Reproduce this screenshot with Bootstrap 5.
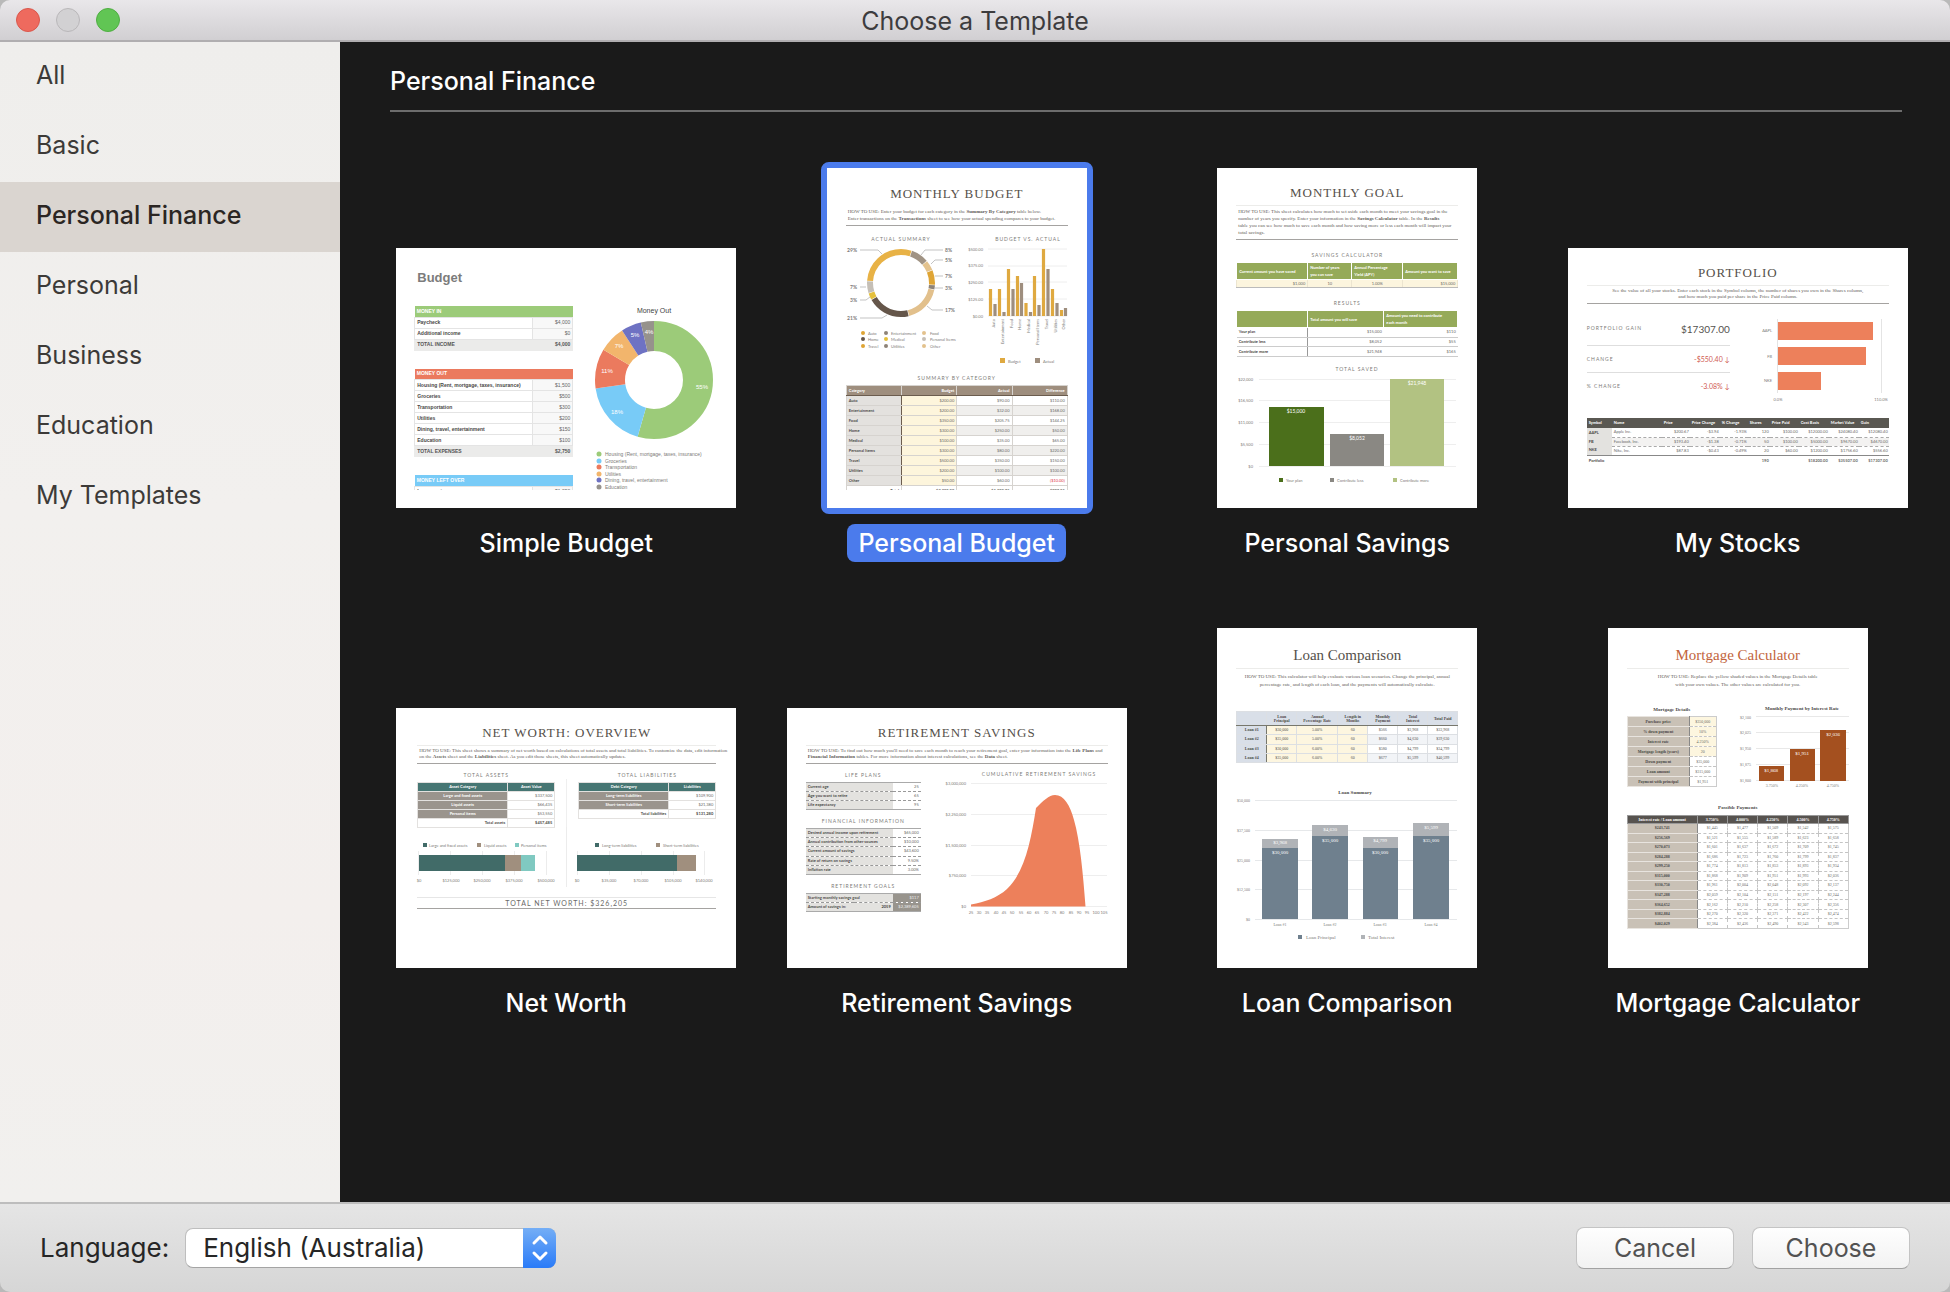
<!DOCTYPE html>
<html lang="en">
<head>
<meta charset="utf-8">
<meta name="viewport" content="width=device-width, initial-scale=1">
<title>Choose a Template</title>
<link href="https://cdn.jsdelivr.net/npm/bootstrap@5.3.0/dist/css/bootstrap.min.css" rel="stylesheet">
<style>
  :root { --accent: #4b7bec; }
  body { font-family: Inter, Roboto, "Liberation Sans", sans-serif; font-size: 25px; line-height: 38px; color: #262626; background: #b9b9b9; }
  .window { border-radius: 10px; overflow: hidden; }

  /* title bar */
  .titlebar { height: 42px; background: linear-gradient(#e9e7ea, #d1cfd2); border-bottom: 2px solid #b0aeb0; }
  .titlebar h1 { font-size: 25px; line-height: 42px; font-weight: 400; color: #3d3c3e; }
  .lights { left: 16px; top: 8px; gap: 16px; }
  .light { width: 24px; height: 24px; border-radius: 50%; border: 1px solid #b9b7b9; background: #d2d1d3; padding: 0; }
  .light-close { background: #ee6a5e; border-color: #d9574c; }
  .light-zoom { background: #61c554; border-color: #4fae42; }

  /* categories */
  .sidebar { width: 340px; background: linear-gradient(#efeeec, #f2f0ee 40%, #f3efed 75%, #f1f0ee); }
  .sidebar .nav-link { padding: 14px 36px 18px; color: #3c3a38; }
  .sidebar .nav-link:hover { color: #111; }
  .sidebar .nav-link.active { background: #dad5d0; color: #2b2623; font-weight: 500; }

  /* gallery */
  .gallery { background: #1a1a1a; color: #fff; }
  .gallery-title { margin: 0 48px 0 50px; padding: 20px 0 10px; border-bottom: 2px solid #6d6d6d; font-size: 25px; line-height: 38px; font-weight: 500; }
  .gallery-grid { padding: 56px 17px 0 31px; row-gap: 66px; }
  .template { color: #fff; text-decoration: none; font-weight: 500; }
  .template-slot { height: 340px; margin-bottom: 16px; }
  .template-name { padding: 0 11px; border-radius: 8px; }
  .template.selected .frame { border: 6px solid var(--accent); border-radius: 8px; margin: -6px; }
  .template.selected .template-name { background: var(--accent); }

  /* footer */
  .bottombar { background: linear-gradient(#e5e5e5, #d6d6d6); border-top: 2px solid #bdbdbd; padding: 23px 40px; height: 90px; }
  .bottombar label { font-size: 26px; }
  .lang-select { width: 371px; height: 40px; padding: 0 50px 0 17px; border: 1px solid #bebebe; border-bottom-color: #a4a4a4; border-radius: 8px; background: #fff; appearance: none; color: #262626; font-size: 26px; line-height: 38px; }
  .lang-arrows { right: 0; top: 0; width: 33px; height: 40px; border-radius: 0 8px 8px 0; background: linear-gradient(#74aef6, #2a7bf8); pointer-events: none; }
  .push { width: 158px; height: 42px; padding: 0; font-size: 25px; line-height: 38px; border: 1px solid #c4c4c4; border-bottom-color: #a2a2a2; border-radius: 8px; background: linear-gradient(#fefefe, #f2f2f2); color: #525252; }
  .push-row { gap: 18px; }

  /* document previews */
  .sheet { background: #fff; color: #6a6a68; font: 400 4px/1 Lato, "Open Sans", sans-serif; overflow: hidden; text-align: left; white-space: nowrap; }
  .sheet-wide { width: 340px; height: 260px; padding: 0 19px; }
  .sheet-tall { width: 260px; height: 340px; padding: 0 19px; }
  .sheet svg { display: block; overflow: visible; }
  .sheet svg text { dominant-baseline: central; fill: #7d7b78; }
  .sheet svg .mid { text-anchor: middle; }
  .sheet svg .end { text-anchor: end; }
  .sheet svg .cap { font-size: 5px; letter-spacing: 1px; text-anchor: middle; }
  .sheet svg .inv { fill: #fff; text-anchor: middle; }
  .doc-title { font: 400 13px/18px "Liberation Serif", serif; letter-spacing: 1px; color: #55504a; text-align: center; margin: 0; padding-top: 16px; }
  .doc-note { font: 400 5px/6px "Liberation Serif", serif; color: #5f5c58; margin: 3px 0 0; padding: 2px 2px 3px; border-top: 1px solid #ececea; border-bottom: 1px solid #a5a3a1; }
  .doc-cap { font-size: 5px; line-height: 12px; letter-spacing: 1px; font-weight: 400; color: #7d7b78; text-align: center; margin: 5px 0 1px; }
  .roomy .doc-cap { margin-top: 9px; }
  .roomy .doc-note { line-height: 7px; }
  .grid-table { width: 100%; table-layout: fixed; border-collapse: collapse; }
  .grid-table td, .grid-table th { padding: 0 2px; overflow: hidden; vertical-align: middle; }
  .grid-table th { font-weight: 700; color: #4a4846; }
  .grid-table td { text-align: right; }
  .ctr td, .ctr th { text-align: center; }

  .budget { font-family: "Liberation Sans", Arial, sans-serif; font-size: 5px; padding: 0 0 0 18px; }
  .budget .clip { height: 242px; overflow: hidden; }
  .budget .left { width: 159px; }
  .budget h2 { font-size: 13px; line-height: 20px; font-weight: 700; color: #7c7c7c; margin: 0 0 18px 3px; padding-top: 20px; }
  .budget table { margin-bottom: 18px; }
  .budget tr { height: 11px; }
  .budget td, .budget th { border: 1px solid #e4e4e4; }
  .budget td { background: #f8f8f8; border-left: 1px solid #888; color: #666; }
  .budget thead th { color: #fff; font-weight: 700; border: 0; }
  .budget .sum th, .budget .sum td { background: #ebebea; border-color: #ebebea; font-weight: 700; color: #555; }
  .budget .ruled th, .budget .ruled td { border-top: 1px solid #444; }
  .bg-in { background: #9ccb79; } .bg-out { background: #eb7a5e; } .bg-left { background: #78cbf7; }

  .monthly .doc-title { padding-top: 17px; }
  .monthly .doc-note { border-top-color: transparent; margin-top: 4px; padding-top: 0; line-height: 7px; }
  .monthly .doc-cap { margin-top: 0; }
  .monthly .clip { height: 322px; overflow: hidden; }
  .monthly tr { height: 10px; }
  .monthly th, .monthly td { border: 1px solid #d6d3cf; }
  .monthly thead th { background: #9e8e7e; color: #fff; text-align: right; border-bottom: 1px solid #6b5c4e; }
  .monthly thead th:first-child { text-align: left; }
  .monthly tbody th { background: #e3e1de; border-right: 1px solid #6b5c4e; }
  .monthly tbody td:nth-child(2) { background: #fdf5dc; }
  .monthly tbody tr:nth-child(even) td:nth-child(n+3) { background: #f0efed; }
  .monthly tfoot th, .monthly tfoot td { border-top: 1px solid #6b5c4e; text-align: right; font-weight: 700; }

  .goal thead th { background: #95aa59; color: #fff; border: 1px solid #fff; line-height: 7px; font-weight: 700; }
  .goal thead tr { height: 17px; }
  .goal .inputs { height: 26px; } .goal .inputs td { background: #fcf5de; border: 1px solid #ece5d0; border-bottom-color: #bbb; }
  .goal .results { height: 47px; } .goal .results tbody th, .goal .results td { border-bottom: 1px solid #ccc; }
  .goal .results tbody th { border-right: 1px solid #999; }

  .portfolio .doc-note { text-align: center; }
  .portfolio .stats { width: 143px; margin: 8px 0 0; }
  .portfolio .stats div { height: 27px; border-bottom: 1px solid #dedede; }
  .portfolio .stats div:first-child { height: 34px; }
  .portfolio .stats div:last-child { border: 0; }
  .portfolio dt { font-size: 5px; font-weight: 400; letter-spacing: 1px; color: #7d7b78; }
  .portfolio dd { margin: 0; font-size: 7px; color: #cf5a52; }
  .portfolio .gain { font-size: 10px; color: #55534f; }
  .portfolio tr { height: 9px; }
  .portfolio thead tr { height: 10px; }
  .portfolio tfoot tr { height: 11px; }
  .portfolio th, .portfolio td { padding: 0 1px 0 2px; }
  .portfolio thead th { background: #5a5852; color: #fff; }
  .portfolio tbody th { background: #e3e2df; }
  .portfolio tbody td { border-bottom: 1px dashed #aaa; }
  .portfolio tbody tr:nth-child(2) td { background: #f3f2f1; }
  .portfolio tbody td.text { text-align: left; }
  .portfolio tfoot th, .portfolio tfoot td { border-top: 1px solid #888; font-weight: 700; }

  .networth { padding: 0 20px 0 21px; }
  .networth .half { width: 138px; height: 63px; }
  .networth .divider { width: 1px; background: #efefef; margin-top: 15px; }
  .networth tr { height: 9px; }
  .networth th, .networth td { border: 1px solid #e3e1df; text-align: center; }
  .networth thead th { background: #467673; color: #fff; }
  .networth tbody th { background: #9a948d; color: #fff; }
  .networth td { text-align: right; }
  .networth tfoot th { text-align: right; } .networth tfoot td { border-top-color: #b39a86; font-weight: 700; color: #4a4846; }
  .networth .total { font-size: 7px; line-height: 10px; letter-spacing: 1px; text-align: center; margin: 5px 0 0; border-top: 1px solid #e6e6e6; border-bottom: 1px solid #a5a3a1; }

  .retire .left { width: 115px; }
  .retire table { border-top: 1px solid #aaa; border-bottom: 1px solid #aaa; }
  .retire th { background: #e3e2df; } .retire th, .retire td { border-bottom: 1px dashed #999; }
  .retire .life { height: 28px; } .retire .info { height: 47px; } .retire .goals { height: 19px; }
  .retire .goals td { background: #98948d; color: #eee; }
  .retire .goals th.year { text-align: right; }

  .serif { font-family: "Liberation Serif", serif; }
  .serif .doc-title { font-size: 15px; letter-spacing: 0; padding-top: 18px; }
  .serif .doc-note { line-height: 8px; margin-top: 4px; padding: 4px 0 0; border-bottom: 0; text-align: center; }
  .serif .doc-cap { letter-spacing: 0; font-weight: 700; color: #4a4846; }
  .serif svg .head { font-size: 5px; font-weight: 700; fill: #4a4846; text-anchor: middle; }
  .loan table { margin-top: 22px; height: 52px; }
  .loan thead tr { height: 14px; }
  .loan th, .loan td { border: 1px solid #dcdfe3; padding: 0; }
  .loan thead th { background: #d9dfe8; border-bottom: 1px solid #77776c; }
  .loan tbody th { background: #d9dfe8; border-right: 1px solid #77776c; }
  .loan tbody td { color: #4f4f4f; }
  .loan tbody td:nth-child(-n+4) { background: #fdf6e0; }
  .loan tbody tr:nth-child(even) td:nth-child(n+5) { background: #f2f4f7; }
  .mortgage .doc-title { color: #c2643c; }
  .mortgage .left { width: 90px; } .mortgage .left .doc-cap { margin: 15px 0 0; }
  .mortgage .details { height: 71px; } .mortgage .payments { height: 114px; }
  .mortgage .payments thead tr { height: 8px; }
  .mortgage th, .mortgage td { border: 1px dashed #c4c4c4; padding: 0; }
  .mortgage table { border: 1px solid #ccc; }
  .mortgage tbody th { background: #c9c1b6; border: 1px solid #e8e4df; border-right-color: #888; }
  .mortgage thead th { background: #57534f; color: #fff; border: 1px solid #999; }
  .mortgage .yellow td { background: #fdf6df; }
</style>
</head>
<body>
<div class="window d-flex flex-column vh-100">
  <header class="titlebar position-relative flex-shrink-0">
    <div class="lights d-flex position-absolute">
      <button type="button" class="light light-close" aria-label="Close"></button>
      <button type="button" class="light" aria-label="Minimise" disabled></button>
      <button type="button" class="light light-zoom" aria-label="Zoom"></button>
    </div>
    <h1 class="text-center m-0">Choose a Template</h1>
  </header>

  <div class="d-flex flex-grow-1 overflow-hidden">
    <nav class="sidebar nav flex-column flex-nowrap flex-shrink-0" aria-label="Categories">
      <a class="nav-link" href="#">All</a>
      <a class="nav-link" href="#">Basic</a>
      <a class="nav-link active" aria-current="page" href="#">Personal Finance</a>
      <a class="nav-link" href="#">Personal</a>
      <a class="nav-link" href="#">Business</a>
      <a class="nav-link" href="#">Education</a>
      <a class="nav-link" href="#">My Templates</a>
    </nav>

    <main class="gallery flex-grow-1">
      <h2 class="gallery-title">Personal Finance</h2>
      <div class="gallery-grid row row-cols-4 gx-0 m-0">

        <!-- Simple Budget -->
        <div class="col"><a href="#" class="template d-flex flex-column align-items-center">
          <div class="template-slot d-flex align-items-end"><div class="frame"><div class="sheet sheet-wide budget"><div class="clip d-flex">
            <div class="left flex-shrink-0">
              <h2>Budget</h2>
              <table class="grid-table"><colgroup><col><col style="width:40px"></colgroup>
                <thead><tr><th class="bg-in" colspan="2">MONEY IN</th></tr></thead>
                <tbody><tr><th>Paycheck</th><td>$4,000</td></tr><tr><th>Additional income</th><td>$0</td></tr>
                <tr class="sum ruled"><th>TOTAL INCOME</th><td>$4,000</td></tr></tbody></table>
              <table class="grid-table"><colgroup><col><col style="width:40px"></colgroup>
                <thead><tr><th class="bg-out" colspan="2">MONEY OUT</th></tr></thead>
                <tbody><tr><th>Housing (Rent, mortgage, taxes, insurance)</th><td>$1,500</td></tr><tr><th>Groceries</th><td>$500</td></tr><tr><th>Transportation</th><td>$300</td></tr><tr><th>Utilities</th><td>$200</td></tr><tr><th>Dining, travel, entertainment</th><td>$150</td></tr><tr><th>Education</th><td>$100</td></tr>
                <tr class="sum"><th>TOTAL EXPENSES</th><td>$2,750</td></tr></tbody></table>
              <table class="grid-table"><colgroup><col><col style="width:40px"></colgroup>
                <thead><tr><th class="bg-left" colspan="2">MONEY LEFT OVER</th></tr></thead>
                <tbody><tr><th>Income minus expenses</th><td>$1,250</td></tr></tbody></table>
            </div>
            <svg width="163" height="242" viewBox="177 0 163 242" font-size="5">
              <text x="258" y="62" class="mid" font-size="7" style="fill:#444">Money Out</text>
              <g fill="none" stroke-width="30" transform="rotate(-90 258 132)">
                <circle cx="258" cy="132" r="44" pathLength="100" stroke="#9ccb79" stroke-dasharray="54.5 100"/>
                <circle cx="258" cy="132" r="44" pathLength="100" stroke="#78cbf7" stroke-dasharray="18.2 100" stroke-dashoffset="-54.5"/>
                <circle cx="258" cy="132" r="44" pathLength="100" stroke="#eb7a5e" stroke-dasharray="10.9 100" stroke-dashoffset="-72.7"/>
                <circle cx="258" cy="132" r="44" pathLength="100" stroke="#f2b56c" stroke-dasharray="7.3 100" stroke-dashoffset="-83.6"/>
                <circle cx="258" cy="132" r="44" pathLength="100" stroke="#6e72c3" stroke-dasharray="5.5 100" stroke-dashoffset="-90.9"/>
                <circle cx="258" cy="132" r="44" pathLength="100" stroke="#96928c" stroke-dasharray="3.6 100" stroke-dashoffset="-96.4"/>
              </g>
              <g font-size="6"><text class="inv" x="306" y="139">55%</text><text class="inv" x="221" y="164">18%</text><text class="inv" x="211" y="123">11%</text><text class="inv" x="223" y="98">7%</text><text class="inv" x="239" y="87">5%</text><text class="inv" x="253" y="84">4%</text></g>
              <circle cx="203" cy="206" r="2.5" fill="#9ccb79"/><circle cx="203" cy="213" r="2.5" fill="#78cbf7"/><circle cx="203" cy="219" r="2.5" fill="#eb7a5e"/><circle cx="203" cy="226" r="2.5" fill="#f2b56c"/><circle cx="203" cy="232" r="2.5" fill="#6e72c3"/><circle cx="203" cy="239" r="2.5" fill="#96928c"/>
              <text x="209" y="206">Housing (Rent, mortgage, taxes, insurance)</text><text x="209" y="213">Groceries</text><text x="209" y="219">Transportation</text><text x="209" y="226">Utilities</text><text x="209" y="232">Dining, travel, entertainment</text><text x="209" y="239">Education</text>
            </svg>
          </div></div></div></div>
          <span class="template-name">Simple Budget</span></a></div>

        <!-- Personal Budget -->
        <div class="col"><a href="#" class="template selected d-flex flex-column align-items-center" aria-current="true">
          <div class="template-slot d-flex align-items-end"><div class="frame"><div class="sheet sheet-tall monthly"><div class="clip">
            <h2 class="doc-title">MONTHLY BUDGET</h2>
            <p class="doc-note">HOW TO USE: Enter your budget for each category in the <b>Summary By Category</b> table below.<br>Enter transactions on the <b>Transactions</b> sheet to see how your actual spending compares to your budget.</p>
            <svg width="222" height="146" viewBox="19 58 222 146">
              <text class="cap" x="74" y="71">ACTUAL SUMMARY</text><text class="cap" x="201" y="71">BUDGET VS. ACTUAL</text>
              <g fill="none" stroke-width="6" transform="rotate(-90 74 115)">
                <circle cx="74" cy="115" r="31" pathLength="360" stroke="#a09384" stroke-dasharray="30 360" stroke-dashoffset="-19"/>
                <circle cx="74" cy="115" r="31" pathLength="360" stroke="#e3c28d" stroke-dasharray="17 360" stroke-dashoffset="-50"/>
                <circle cx="74" cy="115" r="31" pathLength="360" stroke="#dfa535" stroke-dasharray="25 360" stroke-dashoffset="-68"/>
                <circle cx="74" cy="115" r="31" pathLength="360" stroke="#8e8378" stroke-dasharray="7 360" stroke-dashoffset="-94"/>
                <circle cx="74" cy="115" r="31" pathLength="360" stroke="#e2c08c" stroke-dasharray="64 360" stroke-dashoffset="-102"/>
                <circle cx="74" cy="115" r="31" pathLength="360" stroke="#65564a" stroke-dasharray="73 360" stroke-dashoffset="-167"/>
                <circle cx="74" cy="115" r="31" pathLength="360" stroke="#e5c03c" stroke-dasharray="11 360" stroke-dashoffset="-241"/>
                <circle cx="74" cy="115" r="31" pathLength="360" stroke="#c5bfb6" stroke-dasharray="20 360" stroke-dashoffset="-253"/>
                <circle cx="74" cy="115" r="31" pathLength="360" stroke="#e8b246" stroke-dasharray="86 360" stroke-dashoffset="-274"/>
                <circle cx="74" cy="115" r="31" pathLength="360" stroke="#e8b246" stroke-dasharray="18 360"/>
              </g>
              <g fill="none" stroke="#aaa" stroke-width=".7"><path d="M33 82H51L55 86M33 119H39M33 132H39L43 129M33 150H55L60 147M116 82H98L94 87M116 92H108L104 96M116 108H108M116 120H108M116 142H105L100 138"/></g>
              <g font-size="5" font-weight="700"><text class="end" x="30" y="82">29%</text><text class="end" x="30" y="119">7%</text><text class="end" x="30" y="132">3%</text><text class="end" x="30" y="150">21%</text><text x="118" y="82">8%</text><text x="118" y="92">5%</text><text x="118" y="108">7%</text><text x="118" y="120">3%</text><text x="118" y="142">17%</text></g>
              <g fill="#dfa535"><circle cx="36" cy="165" r="2"/><circle cx="36" cy="178" r="2"/></g><g fill="#8e8378"><circle cx="59" cy="165" r="2"/><circle cx="59" cy="178" r="2"/></g><g fill="#e3c28d"><circle cx="97" cy="165" r="2"/><circle cx="97" cy="178" r="2"/></g>
              <circle cx="36" cy="171" r="2" fill="#65564a"/><circle cx="59" cy="171" r="2" fill="#e5c03c"/><circle cx="97" cy="171" r="2" fill="#c5bfb6"/>
              <text x="41" y="165">Auto</text><text x="64" y="165">Entertainment</text><text x="103" y="165">Food</text><text x="41" y="171">Home</text><text x="64" y="171">Medical</text><text x="103" y="171">Personal Items</text><text x="41" y="178">Travel</text><text x="64" y="178">Utilities</text><text x="103" y="178">Other</text>
              <path d="M161 81H240M161 98H240M161 114H240M161 131H240M161 148H240" stroke="#eee" stroke-width="1"/>
              <text class="end" x="156" y="81">$500.00</text><text class="end" x="156" y="97">$375.00</text><text class="end" x="156" y="114">$250.00</text><text class="end" x="156" y="131">$125.00</text><text class="end" x="156" y="148">$0.00</text>
              <path d="M163.500 148V121M172.500 148V121M181.500 148V101M190.500 148V108M199 148V135M207.500 148V108M216.500 148V81M225.500 148V121M234.500 148V142" stroke="#dfa940" stroke-width="3.200"/>
              <path d="M168 148V136M177 148V144M186 148V121M194.500 148V115M203.500 148V144M212 148V137M221 148V101M230 148V135M238.500 148V140" stroke="#9e8e7e" stroke-width="3.200"/>
              <g><text class="end" transform="translate(166 151) rotate(-90)">Auto</text><text class="end" transform="translate(175 151) rotate(-90)">Entertainment</text><text class="end" transform="translate(184 151) rotate(-90)">Food</text><text class="end" transform="translate(192 151) rotate(-90)">Home</text><text class="end" transform="translate(201 151) rotate(-90)">Medical</text><text class="end" transform="translate(210 151) rotate(-90)">Personal Items</text><text class="end" transform="translate(219 151) rotate(-90)">Travel</text><text class="end" transform="translate(228 151) rotate(-90)">Utilities</text><text class="end" transform="translate(236 151) rotate(-90)">Other</text></g>
              <rect x="173" y="190" width="5" height="5" fill="#dfa940"/><text x="181" y="193">Budget</text><rect x="208" y="190" width="5" height="5" fill="#9e8e7e"/><text x="216" y="193">Actual</text>
            </svg>
            <h3 class="doc-cap">SUMMARY BY CATEGORY</h3>
            <table class="grid-table"><thead><tr><th>Category</th><th>Budget</th><th>Actual</th><th>Difference</th></tr></thead>
              <tbody><tr><th>Auto</th><td>$200.00</td><td>$90.00</td><td>$110.00</td></tr><tr><th>Entertainment</th><td>$200.00</td><td>$32.00</td><td>$168.00</td></tr><tr><th>Food</th><td>$350.00</td><td>$205.75</td><td>$144.25</td></tr><tr><th>Home</th><td>$300.00</td><td>$250.00</td><td>$50.00</td></tr><tr><th>Medical</th><td>$100.00</td><td>$35.00</td><td>$65.00</td></tr><tr><th>Personal Items</th><td>$300.00</td><td>$80.00</td><td>$220.00</td></tr><tr><th>Travel</th><td>$500.00</td><td>$350.00</td><td>$150.00</td></tr><tr><th>Utilities</th><td>$200.00</td><td>$100.00</td><td>$100.00</td></tr><tr><th>Other</th><td>$50.00</td><td>$60.00</td><td class="text-danger">($10.00)</td></tr></tbody>
              <tfoot><tr><th>Total</th><td>$2,200.00</td><td>$1,202.75</td><td>$997.25</td></tr></tfoot></table>
          </div></div></div></div>
          <span class="template-name">Personal Budget</span></a></div>

        <!-- Personal Savings -->
        <div class="col"><a href="#" class="template d-flex flex-column align-items-center">
          <div class="template-slot d-flex align-items-end"><div class="frame"><div class="sheet sheet-tall goal roomy">
            <h2 class="doc-title">MONTHLY GOAL</h2>
            <p class="doc-note">HOW TO USE: This sheet calculates how much to set aside each month to meet your savings goal in the<br>number of years you specify. Enter your information in the <b>Savings Calculator</b> table. In the <b>Results</b><br>table you can see how much to save each month and how saving more or less each month will impact your<br>total savings.</p>
            <h3 class="doc-cap">SAVINGS CALCULATOR</h3>
            <table class="grid-table inputs"><colgroup><col style="width:71px"><col style="width:44px"><col style="width:51px"><col></colgroup>
              <thead><tr><th>Current amount you have saved</th><th>Number of years<br>you can save</th><th>Annual Percentage<br>Yield (APY)</th><th>Amount you want to save</th></tr></thead>
              <tbody><tr><td>$1,000</td><td class="text-center">10</td><td class="text-center">1.00%</td><td>$15,000</td></tr></tbody></table>
            <h3 class="doc-cap">RESULTS</h3>
            <table class="grid-table results"><colgroup><col style="width:71px"><col style="width:76px"><col></colgroup>
              <thead><tr><th></th><th>Total amount you will save</th><th>Amount you need to contribute<br>each month</th></tr></thead>
              <tbody><tr><th>Your plan</th><td>$15,000</td><td>$110</td></tr><tr><th>Contribute less</th><td>$8,052</td><td>$55</td></tr><tr><th>Contribute more</th><td>$21,948</td><td>$165</td></tr></tbody></table>
            <svg width="222" height="136" viewBox="19 189 222 136">
              <text class="cap" x="140" y="201">TOTAL SAVED</text>
              <path d="M42 211.500H239M42 232.500H239M42 254.500H239M42 276.500H239M42 298.500H239" stroke="#eee"/>
              <text class="end" x="36" y="211">$22,000</text><text class="end" x="36" y="232">$16,500</text><text class="end" x="36" y="254">$11,000</text><text class="end" x="36" y="276">$5,500</text><text class="end" x="36" y="298">$0</text>
              <rect x="52" y="239" width="55" height="59" fill="#4b6f1b"/><rect x="113" y="266" width="54" height="32" fill="#8a8883"/><rect x="173" y="211" width="54" height="87" fill="#b2c282"/>
              <g font-size="5"><text class="inv" x="79" y="243">$15,000</text><text class="inv" x="140" y="270">$8,052</text><text class="inv" x="200" y="215">$21,948</text></g>
              <rect x="62" y="310" width="4" height="4" fill="#4b6f1b"/><text x="69" y="312">Your plan</text><rect x="113" y="310" width="4" height="4" fill="#8a8883"/><text x="120" y="312">Contribute less</text><rect x="176" y="310" width="4" height="4" fill="#b2c282"/><text x="183" y="312">Contribute more</text>
            </svg>
          </div></div></div>
          <span class="template-name">Personal Savings</span></a></div>

        <!-- My Stocks -->
        <div class="col"><a href="#" class="template d-flex flex-column align-items-center">
          <div class="template-slot d-flex align-items-end"><div class="frame"><div class="sheet sheet-wide portfolio">
            <h2 class="doc-title">PORTFOLIO</h2>
            <p class="doc-note">See the value of all your stocks. Enter each stock in the Symbol column, the number of shares you own in the Shares column,<br>and how much you paid per share in the Price Paid column.</p>
            <div class="d-flex">
              <dl class="stats flex-shrink-0">
                <div class="d-flex justify-content-between align-items-center"><dt>PORTFOLIO GAIN</dt><dd class="gain">$17307.00</dd></div>
                <div class="d-flex justify-content-between align-items-center"><dt>CHANGE</dt><dd>-$550.40 ↓</dd></div>
                <div class="d-flex justify-content-between align-items-center"><dt>% CHANGE</dt><dd>-3.08% ↓</dd></div>
              </dl>
              <svg width="159" height="114" viewBox="162 56 159 114">
                <path d="M209.500 71V145M313.500 71V145" stroke="#e4e4e4"/>
                <g fill="#ed805b"><rect x="210" y="74" width="95" height="18"/><rect x="210" y="99" width="88" height="18"/><rect x="210" y="124" width="43" height="18"/></g>
                <text class="end" x="204" y="82">AAPL</text><text class="end" x="204" y="108">FB</text><text class="end" x="204" y="132">NKE</text><text class="mid" x="210" y="151">0.0%</text><text class="mid" x="313" y="151">110.0%</text>
              </svg>
            </div>
            <table class="grid-table"><colgroup><col style="width:25px"><col style="width:50px"><col style="width:28px"><col style="width:30px"><col style="width:28px"><col style="width:22px"><col style="width:29px"><col style="width:30px"><col style="width:30px"><col></colgroup>
              <thead><tr><th>Symbol</th><th>Name</th><th>Price</th><th>Price Change</th><th>% Change</th><th>Shares</th><th>Price Paid</th><th>Cost Basis</th><th>Market Value</th><th>Gain</th></tr></thead>
              <tbody><tr><th>AAPL</th><td class="text">Apple Inc.</td><td>$200.67</td><td>-$3.94</td><td>-1.93%</td><td>120</td><td>$100.00</td><td>$12000.00</td><td>$24080.40</td><td>$12080.40</td></tr><tr><th>FB</th><td class="text">Facebook, Inc.</td><td>$193.40</td><td>-$1.38</td><td>-0.71%</td><td>50</td><td>$100.00</td><td>$5000.00</td><td>$9670.00</td><td>$4670.00</td></tr><tr><th>NKE</th><td class="text">Nike, Inc.</td><td>$87.83</td><td>-$0.43</td><td>-0.49%</td><td>20</td><td>$60.00</td><td>$1200.00</td><td>$1756.60</td><td>$556.60</td></tr></tbody>
              <tfoot><tr><th>Portfolio</th><td></td><td></td><td></td><td></td><td>190</td><td></td><td>$18200.00</td><td>$35507.00</td><td>$17307.00</td></tr></tfoot></table>
          </div></div></div>
          <span class="template-name">My Stocks</span></a></div>

        <!-- Net Worth -->
        <div class="col"><a href="#" class="template d-flex flex-column align-items-center">
          <div class="template-slot d-flex align-items-end"><div class="frame"><div class="sheet sheet-wide networth">
            <h2 class="doc-title">NET WORTH: OVERVIEW</h2>
            <p class="doc-note">HOW TO USE: This sheet shows a summary of net worth based on calculations of total assets and total liabilities. To customize the data, edit information<br>on the <b>Assets</b> sheet and the <b>Liabilities</b> sheet. As you edit those sheets, this sheet automatically updates.</p>
            <div class="d-flex justify-content-between">
              <div class="half"><h3 class="doc-cap">TOTAL ASSETS</h3>
                <table class="grid-table"><colgroup><col style="width:90px"><col></colgroup><thead><tr><th>Asset Category</th><th>Asset Value</th></tr></thead>
                <tbody><tr><th>Large and fixed assets</th><td>$337,500</td></tr><tr><th>Liquid assets</th><td>$66,435</td></tr><tr><th>Personal items</th><td>$53,550</td></tr></tbody>
                <tfoot><tr><th>Total assets</th><td>$457,485</td></tr></tfoot></table></div>
              <div class="divider"></div>
              <div class="half"><h3 class="doc-cap">TOTAL LIABILITIES</h3>
                <table class="grid-table"><colgroup><col style="width:90px"><col></colgroup><thead><tr><th>Debt Category</th><th>Liabilities</th></tr></thead>
                <tbody><tr><th>Long-term liabilities</th><td>$109,900</td></tr><tr><th>Short-term liabilities</th><td>$21,380</td></tr></tbody>
                <tfoot><tr><th>Total liabilities</th><td>$131,280</td></tr></tfoot></table></div>
            </div>
            <svg width="299" height="65" viewBox="21 119 299 65">
              <path d="M170.500 119V179M22.500 143V167M54.500 143V167M86.500 143V167M118.500 143V167M150.500 143V167M181.500 143V167M213.500 143V167M245.500 143V167M277.500 143V167M308.500 143V167" stroke="#ececec"/>
              <g fill="#416b68"><rect x="27" y="135" width="4" height="4"/><rect x="199" y="135" width="4" height="4"/><rect x="23" y="147" width="86" height="16"/><rect x="181" y="147" width="100" height="16"/></g>
              <g fill="#a08f7e"><rect x="81" y="135" width="4" height="4"/><rect x="260" y="135" width="4" height="4"/><rect x="109" y="147" width="16" height="16"/><rect x="281" y="147" width="19" height="16"/></g>
              <g fill="#80c9c1"><rect x="119" y="135" width="4" height="4"/><rect x="125" y="147" width="14" height="16"/></g>
              <text x="33" y="137">Large and fixed assets</text><text x="88" y="137">Liquid assets</text><text x="125" y="137">Personal items</text><text x="206" y="137">Long-term liabilities</text><text x="267" y="137">Short-term liabilities</text>
              <text class="mid" x="23" y="172">$0</text><text class="mid" x="55" y="172">$125,000</text><text class="mid" x="86" y="172">$250,000</text><text class="mid" x="118" y="172">$375,000</text><text class="mid" x="150" y="172">$500,000</text><text class="mid" x="181" y="172">$0</text><text class="mid" x="213" y="172">$35,000</text><text class="mid" x="245" y="172">$70,000</text><text class="mid" x="277" y="172">$105,000</text><text class="mid" x="308" y="172">$140,000</text>
            </svg>
            <p class="total">TOTAL NET WORTH: $326,205</p>
          </div></div></div>
          <span class="template-name">Net Worth</span></a></div>

        <!-- Retirement Savings -->
        <div class="col"><a href="#" class="template d-flex flex-column align-items-center">
          <div class="template-slot d-flex align-items-end"><div class="frame"><div class="sheet sheet-wide retire">
            <h2 class="doc-title">RETIREMENT SAVINGS</h2>
            <p class="doc-note">HOW TO USE: To find out how much you'll need to save each month to reach your retirement goal, enter your information into the <b>Life Plans</b> and<br><b>Financial Information</b> tables. For more information about interest calculations, see the <b>Data</b> sheet.</p>
            <div class="d-flex">
              <div class="left flex-shrink-0">
                <h3 class="doc-cap">LIFE PLANS</h3>
                <table class="grid-table life"><colgroup><col style="width:87px"><col></colgroup><tbody><tr><th>Current age</th><td>25</td></tr><tr><th>Age you want to retire</th><td>65</td></tr><tr><th>Life expectancy</th><td>95</td></tr></tbody></table>
                <h3 class="doc-cap">FINANCIAL INFORMATION</h3>
                <table class="grid-table info"><colgroup><col style="width:87px"><col></colgroup><tbody><tr><th>Desired annual income upon retirement</th><td>$65,000</td></tr><tr><th>Annual contribution from other sources</th><td>$10,000</td></tr><tr><th>Current amount of savings</th><td>$43,600</td></tr><tr><th>Rate of return on savings</th><td>9.50%</td></tr><tr><th>Inflation rate</th><td>3.00%</td></tr></tbody></table>
                <h3 class="doc-cap">RETIREMENT GOALS</h3>
                <table class="grid-table goals"><colgroup><col style="width:48px"><col style="width:39px"><col></colgroup><tbody><tr><th colspan="2">Starting monthly savings goal</th><td>$117</td></tr><tr><th>Amount of savings in:</th><th class="year">2059</th><td>$2,389,605</td></tr></tbody></table>
              </div>
              <svg width="187" height="152" viewBox="134 56 187 152">
                <text class="cap" x="252" y="66">CUMULATIVE RETIREMENT SAVINGS</text>
                <path d="M184 75.500H320M184 106.500H320M184 137.500H320M184 167.500H320M184 198.500H320" stroke="#eee"/>
                <text class="end" x="179" y="75">$3,000,000</text><text class="end" x="179" y="106">$2,250,000</text><text class="end" x="179" y="137">$1,500,000</text><text class="end" x="179" y="167">$750,000</text><text class="end" x="179" y="198">$0</text>
                <path d="M184 196.500C198 194 210 190 220 181C238 164 244 132 249 100C256 93 262 87 268 87C277 87 283 97 287 112C293 133 296 165 298.500 198.500H184Z" fill="#ed805b"/>
                <text class="mid" x="184" y="204">25</text><text class="mid" x="192" y="204">30</text><text class="mid" x="200" y="204">35</text><text class="mid" x="209" y="204">40</text><text class="mid" x="217" y="204">45</text><text class="mid" x="225" y="204">50</text><text class="mid" x="234" y="204">55</text><text class="mid" x="242" y="204">60</text><text class="mid" x="250" y="204">65</text><text class="mid" x="259" y="204">70</text><text class="mid" x="267" y="204">75</text><text class="mid" x="275" y="204">80</text><text class="mid" x="284" y="204">85</text><text class="mid" x="292" y="204">90</text><text class="mid" x="300" y="204">95</text><text class="mid" x="309" y="204">100</text><text class="mid" x="317" y="204">105</text>
              </svg>
            </div>
          </div></div></div>
          <span class="template-name">Retirement Savings</span></a></div>

        <!-- Loan Comparison -->
        <div class="col"><a href="#" class="template d-flex flex-column align-items-center">
          <div class="template-slot d-flex align-items-end"><div class="frame"><div class="sheet sheet-tall serif loan">
            <h2 class="doc-title">Loan Comparison</h2>
            <p class="doc-note">HOW TO USE: This calculator will help evaluate various loan scenarios. Change the principal, annual<br>percentage rate, and length of each loan, and the payments will automatically calculate.</p>
            <table class="grid-table ctr"><colgroup><col style="width:30px"><col style="width:30px"><col style="width:41px"><col style="width:30px"><col style="width:30px"><col style="width:30px"><col></colgroup>
              <thead><tr><th></th><th>Loan<br>Principal</th><th>Annual<br>Percentage Rate</th><th>Length in<br>Months</th><th>Monthly<br>Payment</th><th>Total<br>Interest</th><th>Total Paid</th></tr></thead>
              <tbody><tr><th>Loan #1</th><td>$30,000</td><td>5.00%</td><td>60</td><td>$566</td><td>$3,968</td><td>$33,968</td></tr><tr><th>Loan #2</th><td>$35,000</td><td>5.00%</td><td>60</td><td>$660</td><td>$4,630</td><td>$39,630</td></tr><tr><th>Loan #3</th><td>$30,000</td><td>6.00%</td><td>60</td><td>$580</td><td>$4,799</td><td>$34,799</td></tr><tr><th>Loan #4</th><td>$35,000</td><td>6.00%</td><td>60</td><td>$677</td><td>$5,599</td><td>$40,599</td></tr></tbody></table>
            <svg width="222" height="190" viewBox="19 135 222 190">
              <text class="head" x="138" y="164">Loan Summary</text>
              <path d="M38 172.500H240M38 202.500H240M38 232.500H240M38 261.500H240M38 291.500H240" stroke="#e6e8ea"/>
              <text class="end" x="33" y="172">$50,000</text><text class="end" x="33" y="202">$37,500</text><text class="end" x="33" y="232">$25,000</text><text class="end" x="33" y="261">$12,500</text><text class="end" x="33" y="291">$0</text>
              <g fill="#b0b3b7"><rect x="45" y="211" width="36" height="9"/><rect x="95" y="197" width="36" height="11"/><rect x="146" y="209" width="35" height="11"/><rect x="196" y="195" width="36" height="13"/><rect x="144" y="307" width="4" height="4"/></g>
              <g fill="#6f808e"><rect x="45" y="220" width="36" height="71"/><rect x="95" y="208" width="36" height="83"/><rect x="146" y="220" width="35" height="71"/><rect x="196" y="208" width="36" height="83"/><rect x="81" y="307" width="4" height="4"/></g>
              <g font-size="5"><text class="inv" x="63" y="214">$3,968</text><text class="inv" x="113" y="201">$4,630</text><text class="inv" x="163" y="212">$4,799</text><text class="inv" x="214" y="199">$5,599</text><text class="inv" x="63" y="224">$30,000</text><text class="inv" x="113" y="212">$35,000</text><text class="inv" x="163" y="224">$30,000</text><text class="inv" x="214" y="212">$35,000</text></g>
              <text class="mid" x="63" y="296">Loan #1</text><text class="mid" x="113" y="296">Loan #2</text><text class="mid" x="163" y="296">Loan #3</text><text class="mid" x="214" y="296">Loan #4</text>
              <text x="89" y="309" font-size="5">Loan Principal</text><text x="151" y="309" font-size="5">Total Interest</text>
            </svg>
          </div></div></div>
          <span class="template-name">Loan Comparison</span></a></div>

        <!-- Mortgage Calculator -->
        <div class="col"><a href="#" class="template d-flex flex-column align-items-center">
          <div class="template-slot d-flex align-items-end"><div class="frame"><div class="sheet sheet-tall serif roomy mortgage">
            <h2 class="doc-title">Mortgage Calculator</h2>
            <p class="doc-note">HOW TO USE: Replace the yellow shaded values in the Mortgage Details table<br>with your own values. The other values are calculated for you.</p>
            <div class="d-flex">
              <div class="left flex-shrink-0"><h3 class="doc-cap">Mortgage Details</h3>
                <table class="grid-table ctr details"><colgroup><col style="width:62px"><col></colgroup>
                <tbody><tr class="yellow"><th>Purchase price</th><td>$350,000</td></tr><tr class="yellow"><th>% down payment</th><td>10%</td></tr><tr class="yellow"><th>Interest rate</th><td>4.250%</td></tr><tr class="yellow"><th>Mortgage length (years)</th><td>20</td></tr><tr><th>Down payment</th><td>$35,000</td></tr><tr><th>Loan amount</th><td>$315,000</td></tr><tr><th>Payment with principal</th><td>$1,951</td></tr></tbody></table></div>
              <svg width="132" height="104" viewBox="109 61 132 104">
                <text class="head" x="194" y="80">Monthly Payment by Interest Rate</text>
                <path d="M148 88.500H241M148 104.500H241M148 120.500H241M148 136.500H241M148 152.500H241" stroke="#e8e8e8"/>
                <text class="end" x="143" y="89">$2,100</text><text class="end" x="143" y="104">$2,025</text><text class="end" x="143" y="120">$1,950</text><text class="end" x="143" y="136">$1,875</text><text class="end" x="143" y="152">$1,800</text>
                <g fill="#a4501f"><rect x="151" y="138" width="25" height="15"/><rect x="182" y="121" width="25" height="32"/><rect x="212" y="102" width="26" height="51"/></g>
                <g font-size="5"><text class="inv" x="163" y="142">$1,868</text><text class="inv" x="194" y="125">$1,951</text><text class="inv" x="225" y="106">$2,036</text></g>
                <text class="mid" x="164" y="157">3.750%</text><text class="mid" x="194" y="157">4.250%</text><text class="mid" x="225" y="157">4.750%</text>
              </svg>
            </div>
            <h3 class="doc-cap">Possible Payments</h3>
            <table class="grid-table ctr payments"><colgroup><col style="width:70px"><col><col><col><col><col></colgroup>
              <thead><tr><th>Interest rate / Loan amount</th><th>3.750%</th><th>4.000%</th><th>4.250%</th><th>4.500%</th><th>4.750%</th></tr></thead>
              <tbody>
              <tr><th>$243,741</th><td>$1,445</td><td>$1,477</td><td>$1,509</td><td>$1,542</td><td>$1,575</td></tr>
              <tr><th>$256,569</th><td>$1,521</td><td>$1,555</td><td>$1,589</td><td>$1,623</td><td>$1,658</td></tr>
              <tr><th>$270,073</th><td>$1,601</td><td>$1,637</td><td>$1,672</td><td>$1,709</td><td>$1,745</td></tr>
              <tr><th>$284,288</th><td>$1,686</td><td>$1,723</td><td>$1,760</td><td>$1,799</td><td>$1,837</td></tr>
              <tr><th>$299,250</th><td>$1,774</td><td>$1,813</td><td>$1,853</td><td>$1,893</td><td>$1,934</td></tr>
              <tr><th>$315,000</th><td>$1,868</td><td>$1,909</td><td>$1,951</td><td>$1,993</td><td>$2,036</td></tr>
              <tr><th>$330,750</th><td>$1,961</td><td>$2,004</td><td>$2,048</td><td>$2,092</td><td>$2,137</td></tr>
              <tr><th>$347,288</th><td>$2,059</td><td>$2,104</td><td>$2,151</td><td>$2,197</td><td>$2,244</td></tr>
              <tr><th>$364,652</th><td>$2,162</td><td>$2,210</td><td>$2,258</td><td>$2,307</td><td>$2,356</td></tr>
              <tr><th>$382,884</th><td>$2,270</td><td>$2,320</td><td>$2,371</td><td>$2,422</td><td>$2,474</td></tr>
              <tr><th>$402,029</th><td>$2,384</td><td>$2,436</td><td>$2,490</td><td>$2,543</td><td>$2,598</td></tr>
              </tbody></table>
          </div></div></div>
          <span class="template-name">Mortgage Calculator</span></a></div>
      </div>
    </main>
  </div>

  <footer class="bottombar d-flex align-items-center flex-shrink-0">
    <label for="lang" class="me-3">Language:</label>
    <div class="position-relative">
      <select id="lang" class="lang-select d-block">
        <option>English (Australia)</option>
        <option>English (United Kingdom)</option>
        <option>English (United States)</option>
      </select>
      <span class="lang-arrows position-absolute d-flex align-items-center justify-content-center">
        <svg width="18" height="28" viewBox="0 0 18 28" fill="none" stroke="#fff" stroke-width="3" stroke-linecap="round" stroke-linejoin="round" aria-hidden="true"><path d="M3 9l6-6 6 6M3 19l6 6 6-6"/></svg>
      </span>
    </div>
    <div class="push-row d-flex ms-auto">
      <button type="button" class="btn push">Cancel</button>
      <button type="button" class="btn push">Choose</button>
    </div>
  </footer>
</div>
<script src="https://cdn.jsdelivr.net/npm/bootstrap@5.3.0/dist/js/bootstrap.bundle.min.js"></script>
</body>
</html>
